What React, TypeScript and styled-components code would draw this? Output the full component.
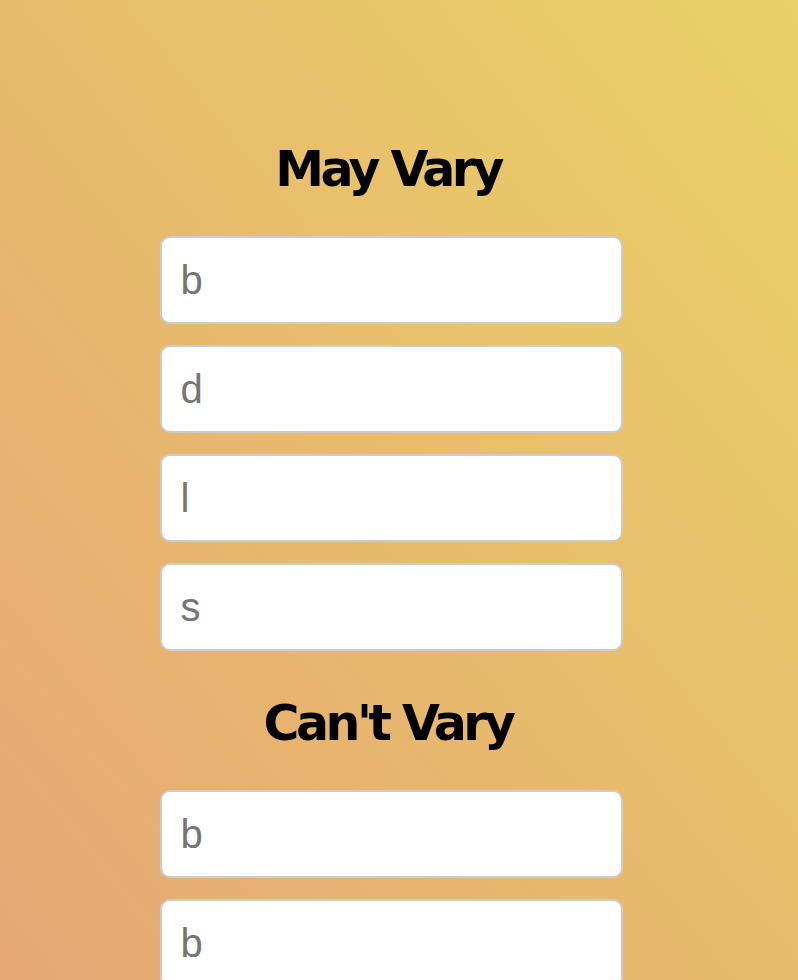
import { createGlobalStyle } from "styled-components";
import styled from "styled-components";

const GlobalStyle = createGlobalStyle`
  html, body {
    margin: 0;
    padding: 0;
  }
  body {
    min-height: 980px;
    background: linear-gradient(to top right, #e5a876 0%, #e8bb6c 50%, #e9d267 100%);
    background-attachment: fixed;
    font-family: "Liberation Sans", Arial, sans-serif;
  }
`;

type Section = {
  title: string;
  fields: string[];
};

const sections: Section[] = [
  { title: "May Vary", fields: ["b", "d", "l", "s"] },
  { title: "Can't Vary", fields: ["b", "b", "b", "b"] },
];

function App() {
  return (
    <>
      <GlobalStyle />
      <Page>
        {sections.map((section, index) => (
          <Group key={`section-${index}`} first={index === 0}>
            <Title>{section.title}</Title>
            <Fields>
              {section.fields.map((field, i) => (
                <Field key={`field-${index}-${i}`} type="text" placeholder={field} />
              ))}
            </Fields>
          </Group>
        ))}
      </Page>
    </>
  );
}

const Page = styled.main`
  display: flex;
  flex-direction: column;
  align-items: center;
  padding: 141px 16px 40px 0;
  height: 980px;
  box-sizing: border-box;
  overflow: hidden;
`;

const Group = styled.section<{ first: boolean }>`
  display: flex;
  flex-direction: column;
  align-items: center;
  width: 463px;
  margin-top: ${(props) => (props.first ? "0" : "44px")};
`;

const Title = styled.h1`
  margin: 0 0 37px;
  padding-right: 6px;
  font-family: "DejaVu Sans", Verdana, sans-serif;
  font-weight: bold;
  font-size: 49px;
  line-height: 58px;
  letter-spacing: -3.5px;
  color: #000;
  text-align: center;
`;

const Fields = styled.div`
  display: flex;
  flex-direction: column;
  gap: 21px;
  width: 100%;
`;

const Field = styled.input`
  box-sizing: border-box;
  width: 100%;
  height: 88px;
  padding: 0 19px;
  border: 2px solid #cccccc;
  border-radius: 10px;
  background: #ffffff;
  font-family: "Liberation Sans", Arial, sans-serif;
  font-size: 40px;
  color: #333;
  outline: none;
  &::placeholder {
    color: #757575;
  }
`;

export default App;
